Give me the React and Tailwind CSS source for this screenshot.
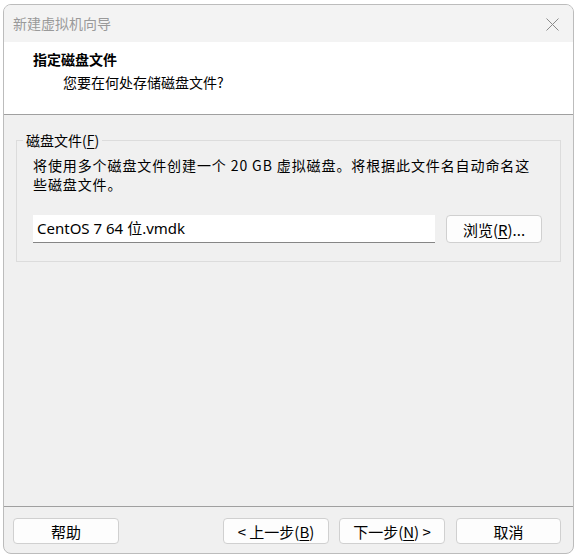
import React from "react";

function Btn({ children, className = "" }) {
  return (
    <button
      className={
        "rounded-[4px] border border-[#d0d0d0] bg-[#fdfdfd] text-[15px] leading-none text-black flex items-center justify-center shrink-0 " +
        className
      }
    >
      {children}
    </button>
  );
}

export default function App() {
  return (
    <div className="w-[577px] h-[557px] bg-white pt-[4px] pl-[3px] font-['Segoe_UI','Noto_Sans','Noto_Sans_CJK_SC',sans-serif]">
      <div className="w-[571px] h-[550px] rounded-[8px] border border-[#bcbcbc] overflow-hidden flex flex-col bg-[#f0f0f0]">
        {/* title bar */}
        <div className="h-[37px] bg-[#f3f3f3] flex items-center justify-between pl-[9px] pr-[14px] shrink-0">
          <span className="text-[14px] text-[#9a9a9a] font-['Noto_Sans_CJK_SC',sans-serif]">新建虚拟机向导</span>
          <svg width="13" height="13" viewBox="0 0 13 13" className="mt-[1px]">
            <path d="M0.5 0.5 L12.5 12.5 M12.5 0.5 L0.5 12.5" stroke="#8a8a8a" strokeWidth="1" />
          </svg>
        </div>
        {/* header */}
        <div className="h-[73px] bg-white border-b border-[#a0a0a0] shrink-0 pl-[29px] pt-[7px] font-['Noto_Sans_CJK_SC',sans-serif]">
          <div className="text-[14px] font-bold leading-[20px] text-black">指定磁盘文件</div>
          <div className="text-[14px] leading-[20px] text-black pl-[30px] mt-[3px]">您要在何处存储磁盘文件?</div>
        </div>
        {/* body */}
        <div className="flex-1 px-[12px] pt-[16px]">
          <fieldset className="border border-[#dcdcdc] h-[131px] pl-[16px] pr-[16px]">
            <legend className="-ml-[10px] px-[3px] text-[14px] leading-[18px] text-black font-['Noto_Sans_CJK_SC',sans-serif]">
              磁盘文件(<span className="underline underline-offset-2">F</span>)
            </legend>
            <p className="mt-[7px] text-[14px] leading-[19px] text-black tracking-[0.9px] whitespace-nowrap font-['Noto_Sans_CJK_SC',sans-serif]">
              将使用多个磁盘文件创建一个 20 GB 虚拟磁盘。将根据此文件名自动命名这
              <br />
              些磁盘文件。
            </p>
            <div className="mt-[21px] flex items-center gap-[11px]">
              <div className="w-[402px] h-[28px] bg-white border-b border-[#868686] flex items-center pl-[4px] text-[15px] text-black">
                CentOS 7 64 <span className="font-['Noto_Sans_CJK_SC',sans-serif] ml-[4px]">位</span>.vmdk
              </div>
              <Btn className="w-[96px] h-[28px]">
                <span className="font-['Noto_Sans_CJK_SC',sans-serif]">浏览(<span className="underline underline-offset-2">R</span>)...</span>
              </Btn>
            </div>
          </fieldset>
        </div>
        {/* footer */}
        <div className="h-[47px] border-t border-[#a0a0a0] shrink-0 flex items-start pt-[11px] pl-[9px] font-['Noto_Sans_CJK_SC',sans-serif]">
          <Btn className="w-[106px] h-[26px]">帮助</Btn>
          <Btn className="ml-[104px] w-[106px] h-[26px]">{"< "}上一步(<span className="underline underline-offset-2">B</span>)</Btn>
          <Btn className="ml-[10px] w-[106px] h-[26px]">下一步(<span className="underline underline-offset-2">N</span>){" >"}</Btn>
          <Btn className="ml-[11px] w-[105px] h-[26px]">取消</Btn>
        </div>
      </div>
    </div>
  );
}
